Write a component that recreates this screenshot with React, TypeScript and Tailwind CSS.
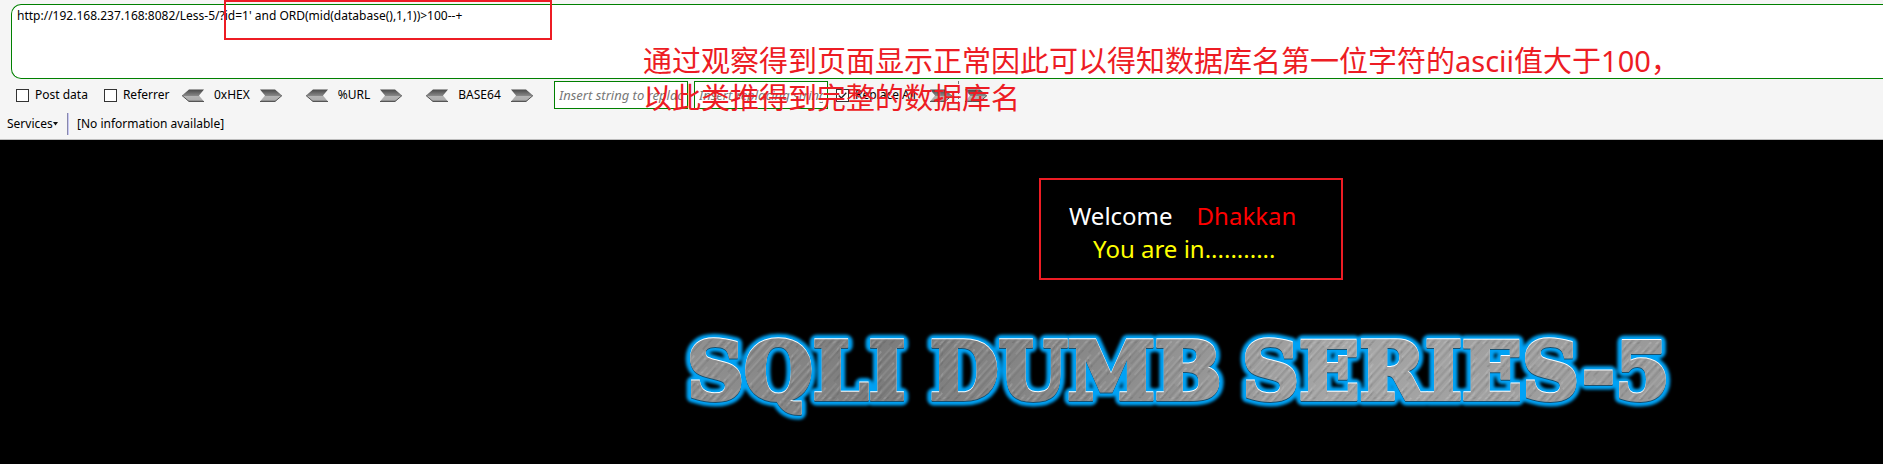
import React from "react";

function ArrowIcon({ id, flip }: { id: string; flip?: boolean }) {
  return (
    <svg
      width="22"
      height="13"
      viewBox="0 0 22 13"
      className={flip ? "block -scale-x-100" : "block"}
      aria-hidden="true"
    >
      <defs>
        <linearGradient id={id} x1="0" y1="0" x2="0" y2="1">
          <stop offset="0" stopColor="#484848" />
          <stop offset="0.5" stopColor="#858585" />
          <stop offset="0.55" stopColor="#b4b4b4" />
          <stop offset="0.88" stopColor="#acacac" />
          <stop offset="1" stopColor="#555" />
        </linearGradient>
      </defs>
      <path d="M0 .5H15L22 6.5L15 12.5H0L5 6.5Z" fill={`url(#${id})`} />
      <path d="M0 12.5H15L22 6.5" fill="none" stroke="#555" strokeWidth="1" />
    </svg>
  );
}

function ArrowButton({ id, label, flip }: { id: string; label: string; flip?: boolean }) {
  return (
    <button type="button" aria-label={label} className="shrink-0">
      <ArrowIcon id={id} flip={flip} />
    </button>
  );
}

function Codec({ name, id }: { name: string; id: string }) {
  return (
    <div className="flex shrink-0 items-center gap-2.5">
      <ArrowButton id={`${id}-decode`} label={`Decode ${name}`} flip />
      <span>{name}</span>
      <ArrowButton id={`${id}-encode`} label={`Encode ${name}`} />
    </div>
  );
}

function Check({ label, checked }: { label: string; checked?: boolean }) {
  return (
    <label className="flex shrink-0 items-center gap-1.5">
      <span className="grid">
        <input
          type="checkbox"
          defaultChecked={checked}
          className="peer col-start-1 row-start-1 size-[13px] appearance-none border border-[#333] bg-white"
        />
        <svg
          viewBox="0 0 13 13"
          className="pointer-events-none invisible col-start-1 row-start-1 size-[13px] peer-checked:visible"
          aria-hidden="true"
        >
          <path d="M2.8 6.5L5.3 9L10.3 3.8" fill="none" stroke="#222" strokeWidth="1.3" />
        </svg>
      </span>
      {label}
    </label>
  );
}

function Logo() {
  const words = (
    <>
      <tspan x="17">SQLI</tspan>
      <tspan x="260">DUMB</tspan>
      <tspan x="572">SERIES-5</tspan>
    </>
  );
  return (
    <svg
      viewBox="0 0 1024 110"
      className="block h-[110px] w-[1024px] shrink-0"
      fontFamily="'DejaVu Serif', serif"
      fontWeight="700"
      fontSize="79"
      role="img"
      aria-label="SQLI DUMB SERIES-5"
    >
      <defs>
        <linearGradient id="steel" gradientUnits="userSpaceOnUse" x1="0" y1="0" x2="1024" y2="100">
          <stop offset="0" stopColor="#949494" />
          <stop offset="0.2" stopColor="#7c7c7c" />
          <stop offset="0.42" stopColor="#8a8a8a" />
          <stop offset="0.65" stopColor="#a6a6a6" />
          <stop offset="1" stopColor="#989898" />
        </linearGradient>
        <pattern id="brush" width="17" height="64" patternUnits="userSpaceOnUse" patternTransform="rotate(42)">
          <path d="M1 0V64M8 10V50M13 0V30" stroke="#fff" strokeOpacity=".16" strokeWidth="1" />
          <path d="M4 0V64M10 30V64M15 5V44" stroke="#333" strokeOpacity=".16" strokeWidth="1" />
        </pattern>
        <filter id="glow" x="-5%" y="-30%" width="110%" height="160%">
          <feGaussianBlur stdDeviation="1.4" />
        </filter>
      </defs>
      <g aria-hidden="true" strokeLinejoin="miter">
        <text y="79" fill="#00a8ff" stroke="#00a2f5" strokeWidth="13" strokeLinejoin="round" filter="url(#glow)">
          {words}
        </text>
        <text x="1" y="80" fill="#17506f" stroke="#17506f" strokeWidth="4">
          {words}
        </text>
        <text y="78" fill="#fff" stroke="#fff" strokeWidth="4">
          {words}
        </text>
        <text y="79" fill="url(#steel)" stroke="url(#steel)" strokeWidth="4">
          {words}
        </text>
      </g>
      <text y="79" fill="url(#brush)" stroke="url(#brush)" strokeWidth="4">
        {words}
      </text>
    </svg>
  );
}

export default function App() {
  return (
    <div className="relative flex min-h-screen flex-col overflow-hidden bg-black font-['Noto_Sans','Noto_Sans_CJK_SC',sans-serif]">
      <header className="border-b border-[#bdbdbd] bg-[#f5f5f5] pt-1 text-xs leading-4 text-black">
        <div className="pl-[11px]">
          <textarea
            aria-label="URL"
            spellCheck={false}
            defaultValue="http://192.168.237.168:8082/Less-5/?id=1' and ORD(mid(database(),1,1))>100--+"
            className="block h-[75px] w-full resize-none rounded-l-[10px] border border-r-0 border-[#008000] bg-white px-[5px] py-[3px] outline-none"
          />
        </div>
        <div className="mt-0.5 flex h-7 items-center pl-4">
          <div className="flex w-[166px] shrink-0 gap-4">
            <Check label="Post data" />
            <Check label="Referrer" />
          </div>
          <div className="flex w-[372px] shrink-0 gap-6">
            <Codec name="0xHEX" id="hex" />
            <Codec name="%URL" id="url" />
            <Codec name="BASE64" id="b64" />
          </div>
          <div className="flex shrink-0 items-center gap-1.5">
            <input
              aria-label="String to replace"
              placeholder="Insert string to replace"
              className="h-7 w-[134px] border border-[#008000] bg-white px-1 text-[13px] outline-none placeholder:italic placeholder:text-[#777]"
            />
            <input
              aria-label="Replacing string"
              placeholder="Insert replacing string"
              className="h-7 w-[134px] border border-[#008000] bg-white px-1 text-[13px] outline-none placeholder:italic placeholder:text-[#777]"
            />
          </div>
          <div className="flex items-center gap-1.5 pl-2">
            <div className="w-[88px]">
              <Check label="Replace All" checked />
            </div>
            <ArrowButton id="replace" label="Replace" />
            <div className="h-7 border-l border-dashed border-[#777]" />
            <ArrowButton id="replace-next" label="Replace next" />
          </div>
        </div>
        <div className="flex h-[30px] items-center pl-[7px]">
          <button type="button" className="flex w-[60px] items-center">
            Services
            <svg width="5" height="4" viewBox="0 0 5 4" aria-hidden="true">
              <path d="M0 0H5L2.5 3.5Z" fill="#111" />
            </svg>
          </button>
          <div className="h-[22px] w-0.5 border-l border-[#8888aa] bg-[#c8c8f4]" />
          <span className="pl-2">[No information available]</span>
        </div>
      </header>

      <main className="pt-[38px]">
        <section className="ml-[1039px] h-[102px] w-[304px] border-2 border-[#ed1c24] pt-[19px] text-2xl leading-[33px]">
          <div className="flex gap-6 pl-7">
            <span className="text-white">Welcome</span>
            <span className="text-[#f00]">Dhakkan</span>
          </div>
          <p className="pl-[52px] text-[#ff0]">You are in...........</p>
        </section>
        <div className="mt-10 pl-[670px]">
          <Logo />
        </div>
      </main>

      <div className="pointer-events-none absolute top-0 left-[224px] h-10 w-[328px] border-2 border-[#ed1c24]" />
      <p className="pointer-events-none absolute top-[42px] left-[643px] text-[29px] leading-[37px] whitespace-nowrap text-[#ed1c24]">
        通过观察得到页面显示正常因此可以得知数据库名第一位字符的ascii值大于100，
        <br />
        以此类推得到完整的数据库名
      </p>
    </div>
  );
}
